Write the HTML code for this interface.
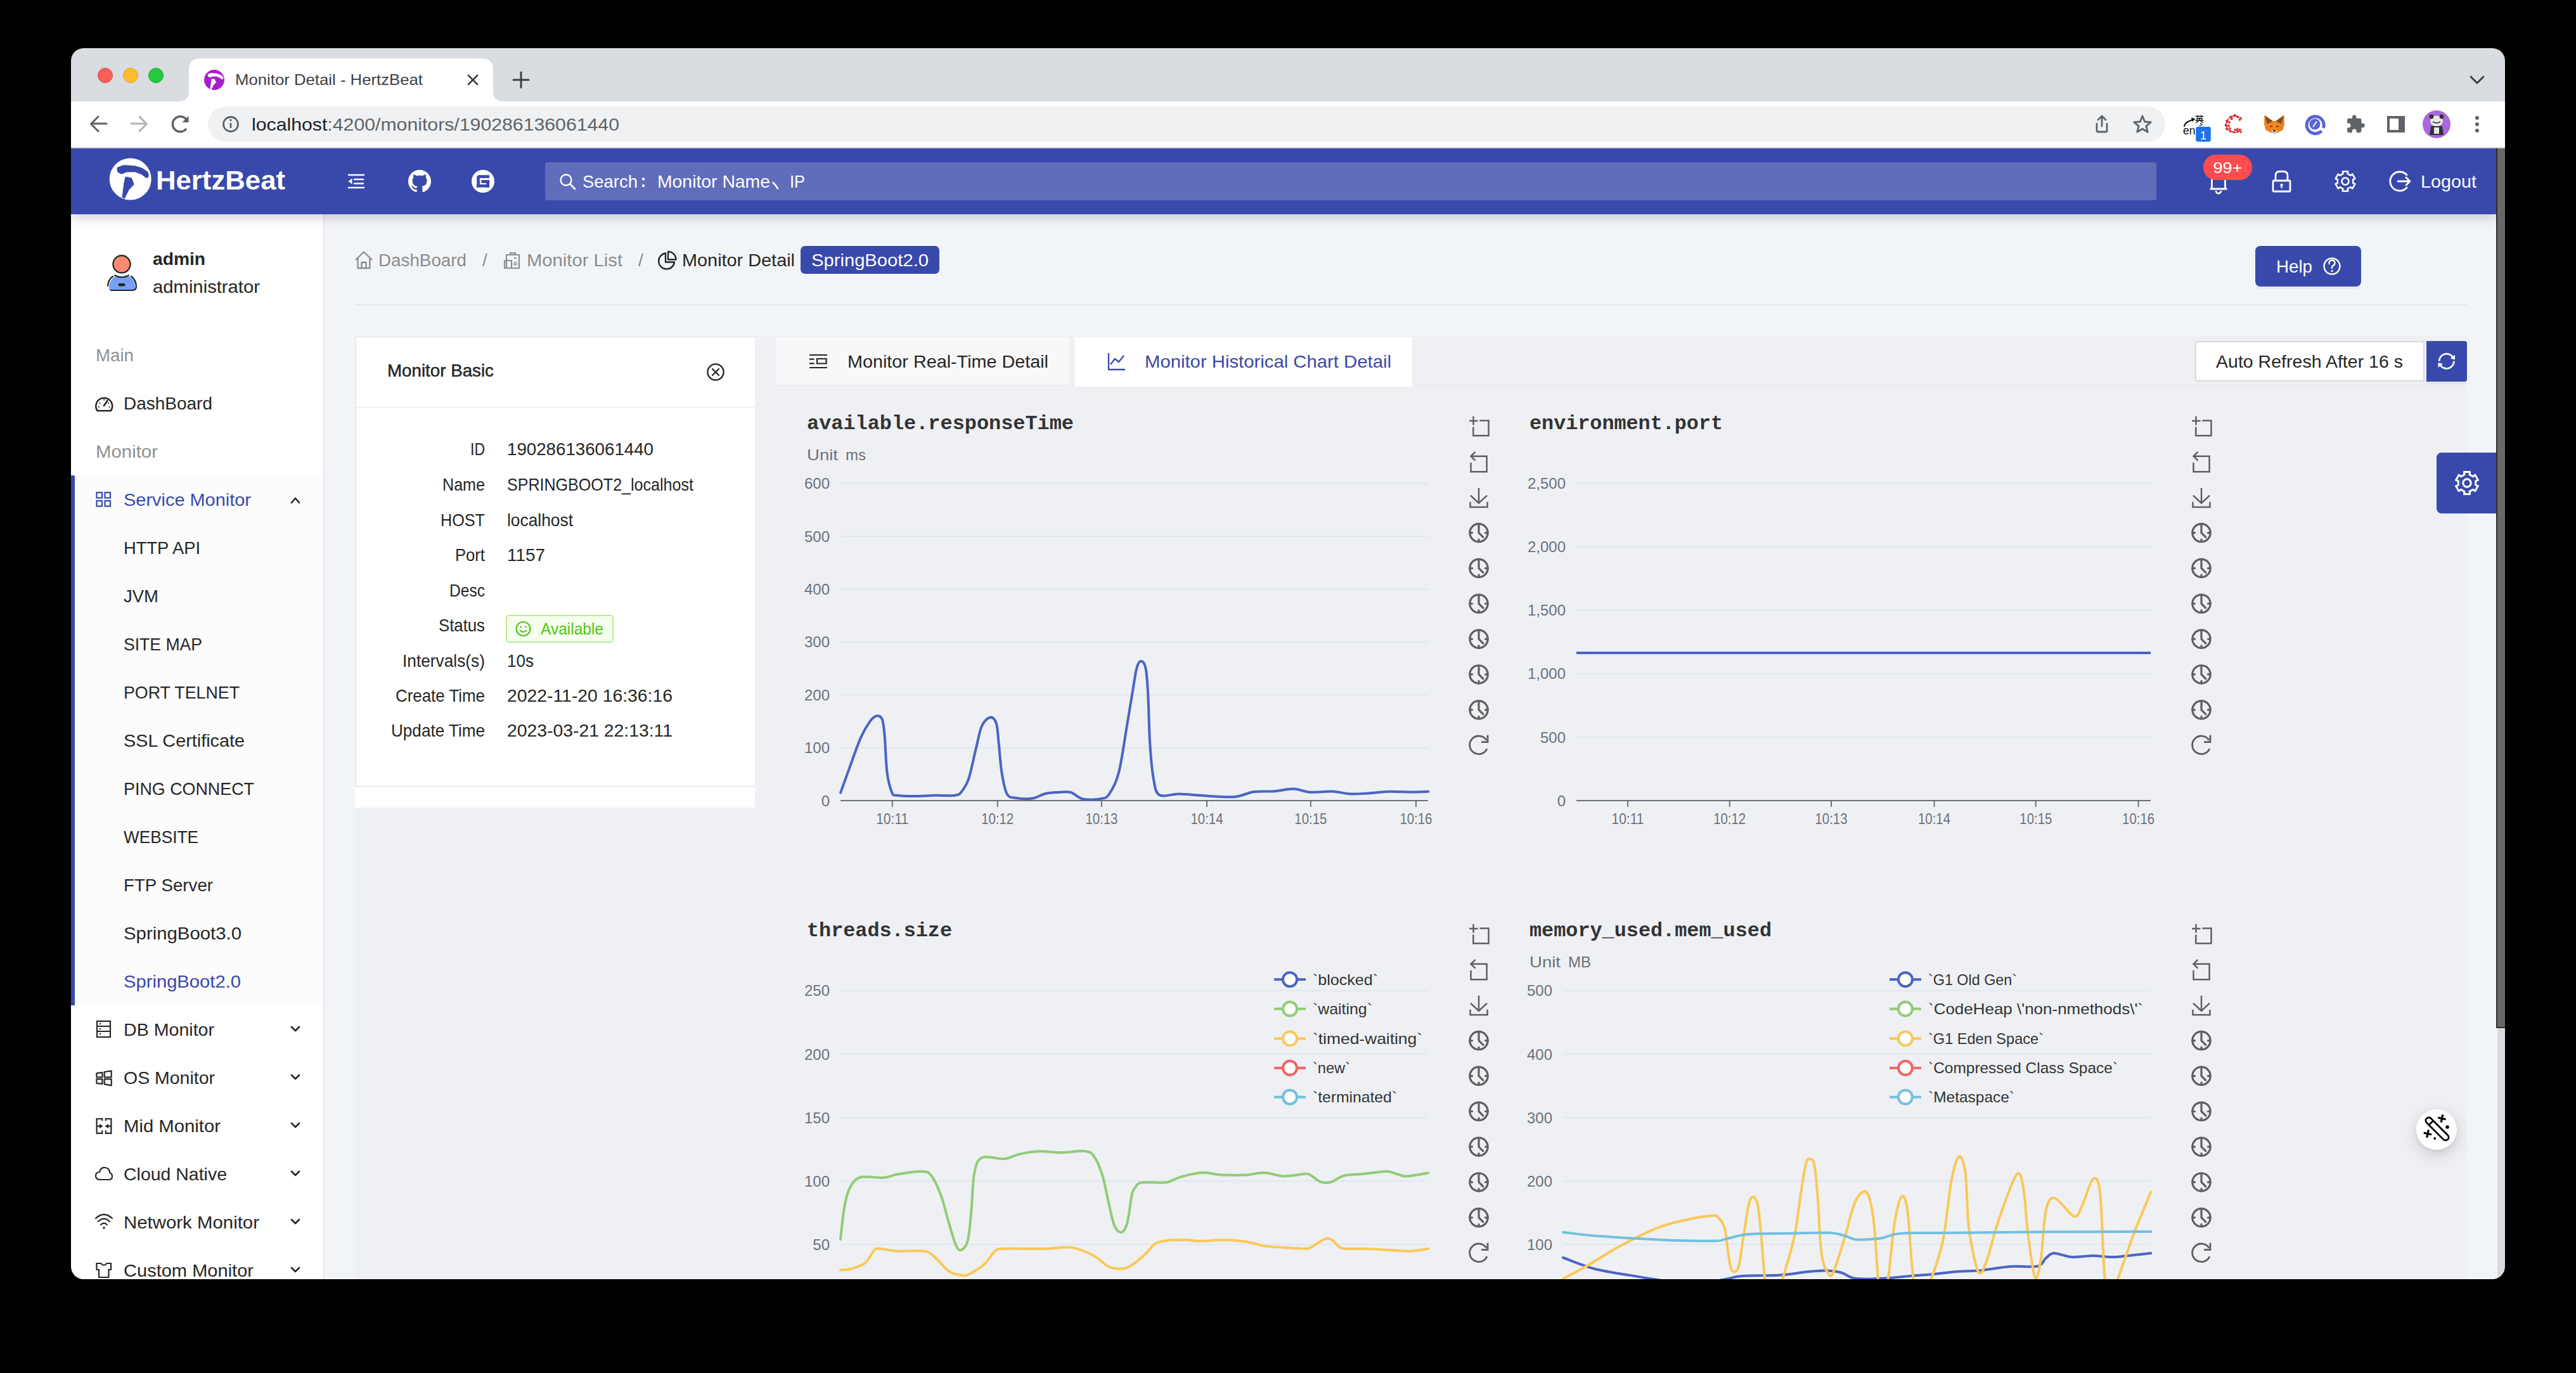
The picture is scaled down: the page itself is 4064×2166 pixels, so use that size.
<!DOCTYPE html><html><head><meta charset="utf-8"><title>Monitor Detail - HertzBeat</title>
<style>html,body{margin:0;padding:0;background:#000;width:4064px;height:2166px;overflow:hidden;font-family:"Liberation Sans", sans-serif;}
#win{position:absolute;left:0;top:0;width:4064px;height:2166px;clip-path:inset(76px 112px 148px 112px round 20px);}
#ov{position:absolute;left:0;top:0;z-index:5;}</style></head><body><div id="win">
<div style="position:absolute;left:112px;top:76px;width:3840px;height:84px;background:#d9dce1;"></div>
<div style="position:absolute;left:112px;top:160px;width:3840px;height:72px;background:#ffffff;z-index:4;"></div>
<div style="position:absolute;left:112px;top:232px;width:3840px;height:2px;background:#d2d4d7;z-index:4;"></div>
<div style="position:absolute;left:112px;top:234px;width:3826px;height:104px;background:#3949ab;z-index:3;box-shadow:0 3px 20px rgba(0,0,0,0.22);"></div>
<div style="position:absolute;left:3938px;top:234px;width:14px;height:1388px;background:#686868;border-left:2px solid #2c2c2c;border-bottom:2px solid #2c2c2c;box-sizing:border-box;z-index:4;"></div>
<div style="position:absolute;left:3940px;top:1622px;width:12px;height:396px;background:#d9dadd;z-index:4;"></div>
<div style="position:absolute;left:112px;top:338px;width:398px;height:1680px;background:#ffffff;"></div>
<div style="position:absolute;left:510px;top:338px;width:2px;height:1680px;background:#efe3e8;"></div>
<div style="position:absolute;left:512px;top:338px;width:3428px;height:1680px;background:#f2f5f8;"></div>
<div style="position:absolute;left:112px;top:750px;width:397px;height:836px;background:#fcfcfc;"></div>
<div style="position:absolute;left:112px;top:750px;width:6px;height:836px;background:#3949ab;"></div>
<div style="position:absolute;left:3558px;top:388px;width:167px;height:64px;background:#3949ab;border-radius:8px;box-shadow:0 4px 0 rgba(0,0,0,0.045);z-index:1;"></div>
<div style="position:absolute;left:560px;top:480px;width:3332px;height:2px;background:#e3e7eb;"></div>
<div style="position:absolute;left:560px;top:1241px;width:633px;height:33px;background:#ffffff;"></div>
<div style="position:absolute;left:560px;top:1274px;width:631px;height:744px;background:#eef0f4;"></div>
<div style="position:absolute;left:560px;top:530px;width:633px;height:712px;background:#ffffff;border:2px solid #ebebeb;border-radius:4px;box-sizing:border-box;"></div>
<div style="position:absolute;left:562px;top:642px;width:629px;height:2px;background:#f0f0f0;z-index:1;"></div>
<div style="position:absolute;left:1191px;top:530px;width:2701px;height:1488px;background:#eef0f4;"></div>
<div style="position:absolute;left:1225px;top:532px;width:462px;height:76px;background:#f8f8f8;"></div>
<div style="position:absolute;left:1225px;top:607px;width:2667px;height:2px;background:#ebebed;"></div>
<div style="position:absolute;left:2228px;top:532px;width:2px;height:77px;background:#ebebed;"></div>
<div style="position:absolute;left:1693px;top:532px;width:2px;height:78px;background:#ececee;"></div>
<div style="position:absolute;left:1695px;top:532px;width:533px;height:78px;background:#ffffff;"></div>
<div style="position:absolute;left:3463px;top:538px;width:362px;height:64px;background:#fff;border:2px solid #d9d9d9;border-radius:4px 0 0 4px;box-sizing:border-box;"></div>
<div style="position:absolute;left:3828px;top:538px;width:64px;height:64px;background:#3949ab;border-radius:0 4px 4px 0;box-shadow:0 4px 0 rgba(0,0,0,0.045);"></div>
<svg id="ov" width="4064" height="2166" viewBox="0 0 4064 2166">
<circle cx="166" cy="119" r="11.5" fill="#ff5f57" stroke="#e0443e" stroke-width="1"/>
<circle cx="206" cy="119" r="11.5" fill="#febc2e" stroke="#dea123" stroke-width="1"/>
<circle cx="246" cy="119" r="11.5" fill="#28c840" stroke="#1aab29" stroke-width="1"/>
<path d="M282,160 Q298,160 298,144 L298,110 Q298,92 316,92 L760,92 Q778,92 778,110 L778,144 Q778,160 794,160 Z" fill="#ffffff"/>
<circle cx="338" cy="126" r="16" fill="#a81fc9"/><polygon points="333.0,115.5 341.5,116.2 347.1,117.9 351.1,120.7 351.8,122.7 351.4,124.7 350.0,124.7 347.1,122.4 341.5,120.2 334.7,120.4 331.3,121.9 328.8,120.7 328.0,118.7 328.5,117.1" fill="#ffffff" stroke="#ffffff" stroke-width="0.7272727272727273" stroke-linejoin="round"/><polygon points="334.2,124.1 339.0,125.0 340.9,130.0 337.0,134.3 333.6,141.1 331.6,139.9 333.0,128.9" fill="#ffffff"/>
<text x="371" y="134" font-size="24" fill="#3c4043" text-anchor="start" font-weight="normal" font-family='"Liberation Sans", sans-serif' textLength="296" lengthAdjust="spacingAndGlyphs" >Monitor Detail - HertzBeat</text>
<path d="M739,119 L753,133 M753,119 L739,133" stroke="#3c4043" stroke-width="2.6" stroke-linecap="round"/>
<path d="M822,114 L822,138 M810,126 L834,126" stroke="#3c4043" stroke-width="3" stroke-linecap="round"/>
<path d="M3898,121 L3908,131 L3918,121" stroke="#3c4043" stroke-width="3" fill="none" stroke-linecap="round" stroke-linejoin="round"/>
<path d="M168,195 L144,195 M155,184 L143.5,195.5 L155,207" stroke="#5f6368" stroke-width="3" fill="none" stroke-linecap="round" stroke-linejoin="round"/>
<path d="M207,195 L231,195 M220,184 L231.5,195.5 L220,207" stroke="#b1b3b6" stroke-width="3" fill="none" stroke-linecap="round" stroke-linejoin="round"/>
<path d="M294,203 A12,12 0 1 1 293.5,188" stroke="#5f6368" stroke-width="3.4" fill="none"/>
<path d="M297.5,183 L297.5,193 L287.5,193 Z" fill="#5f6368"/>
<rect x="328" y="168" width="3088" height="56" rx="28" fill="#eff1f3"/>
<circle cx="364" cy="196" r="11.5" stroke="#5f6368" stroke-width="2.8" fill="none"/>
<rect x="362.6" y="194" width="2.8" height="8" fill="#5f6368"/><circle cx="364" cy="189.5" r="1.7" fill="#5f6368"/>
<text x="397" y="205.5" font-size="28" font-family='"Liberation Sans", sans-serif' textLength="580" lengthAdjust="spacingAndGlyphs"><tspan fill="#202124">localhost</tspan><tspan fill="#5f6368">:4200/monitors/190286136061440</tspan></text>
<path d="M3308,194 L3308,206 Q3308,208 3310,208 L3322,208 Q3324,208 3324,206 L3324,194" stroke="#5f6368" stroke-width="2.8" fill="none" stroke-linejoin="round"/>
<path d="M3316,199 L3316,183 M3310,189 L3316,183 L3322,189" stroke="#5f6368" stroke-width="2.8" fill="none" stroke-linecap="round" stroke-linejoin="round"/>
<polygon points="3380.0,183.0 3383.6,192.0 3393.3,192.7 3385.9,198.9 3388.2,208.3 3380.0,203.2 3371.8,208.3 3374.1,198.9 3366.7,192.7 3376.4,192.0" stroke="#5f6368" stroke-width="2.8" fill="none" stroke-linejoin="round"/>
<text x="3444" y="211.5" font-size="17.5" font-family='"Liberation Sans", sans-serif' fill="#111">en</text>
<path d="M3446,199 Q3447,194 3454,191 Q3458,189 3461,188.5" stroke="#111" stroke-width="2.2" fill="none" stroke-linecap="round"/><path d="M3457,185.5 L3463.5,187.5 L3458.5,192 Z" fill="#111"/>
<path d="M3464,183.5 H3476 M3467,181.5 V185.5 M3473,181.5 V185.5 M3466,190 V187 H3474 V190 M3470,185.5 V190 M3463.5,190 H3476.5 M3469.5,190 L3464.5,194 M3470.5,190 L3476,194 M3471,195 Q3475,195.5 3473,197.5 L3469.5,198.5" stroke="#111" stroke-width="1.3" fill="none"/>
<rect x="3464.3" y="200" width="23.5" height="23.5" rx="3" fill="#1a73e8"/>
<text x="3476" y="219.5" font-size="18" text-anchor="middle" font-family='"Liberation Sans", sans-serif' fill="#fff">1</text>
<path d="M3533,185 Q3524,180 3517,186 Q3510,193 3513,201 Q3517,209 3527,209 Q3532,208.5 3535,205.5" stroke="#d8262c" stroke-width="1.6" fill="none"/>
<path d="M3522,185.5 L3519,189 M3527,183 L3532,186.5 M3516,193 L3512,191 M3515,199 L3511,198 M3517,204.5 L3519,207 M3527,206 L3532,204" stroke="#d8262c" stroke-width="1.3" fill="none"/>
<circle cx="3525.7" cy="182.2" r="2.2" fill="#e0262b"/>
<circle cx="3530.5" cy="184.5" r="1.8" fill="#e0262b"/>
<circle cx="3535.2" cy="186.5" r="1.8" fill="#e0262b"/>
<circle cx="3533.5" cy="189" r="1.8" fill="#e0262b"/>
<circle cx="3519.5" cy="184.5" r="1.9" fill="#e0262b"/>
<circle cx="3521" cy="187.5" r="1.8" fill="#e0262b"/>
<circle cx="3513.5" cy="191" r="2.2" fill="#e0262b"/>
<circle cx="3517" cy="193" r="1.8" fill="#e0262b"/>
<circle cx="3511.5" cy="197.5" r="1.9" fill="#e0262b"/>
<circle cx="3516" cy="198.5" r="1.9" fill="#e0262b"/>
<circle cx="3513" cy="203.5" r="2" fill="#e0262b"/>
<circle cx="3518" cy="202.5" r="1.8" fill="#e0262b"/>
<circle cx="3518.5" cy="207" r="1.8" fill="#e0262b"/>
<circle cx="3524" cy="208.5" r="1.8" fill="#e0262b"/>
<circle cx="3526.5" cy="205" r="2" fill="#e0262b"/>
<circle cx="3530.5" cy="207" r="1.8" fill="#e0262b"/>
<circle cx="3534" cy="205" r="2" fill="#e0262b"/>
<circle cx="3535.5" cy="208.5" r="1.6" fill="#e0262b"/>
<circle cx="3530" cy="203" r="1.6" fill="#e0262b"/>
<polygon points="3572.5,181.5 3586,191 3590,191 3603.5,181.5 3604,196 3601.5,205 3593,209.5 3588,211 3583,209.5 3574.5,205 3572,196" fill="#e8821e"/>
<polygon points="3573,182.5 3585.5,191 3577,195.5" fill="#8a4a1c"/><polygon points="3603,182.5 3590.5,191 3599,195.5" fill="#8a4a1c"/>
<polygon points="3577,195.5 3588,193 3599,195.5 3596,203 3588,205 3580,203" fill="#f6851b"/>
<polygon points="3582.5,206.5 3588,204.5 3593.5,206.5 3590.5,210.8 3585.5,210.8" fill="#d7c1b3"/><circle cx="3588" cy="206.3" r="1.6" fill="#222"/>
<path d="M3581,199.5 L3585,199.5 M3591,199.5 L3595,199.5" stroke="#233447" stroke-width="1.6"/>
<path d="M3662.5,206.5 A13.5,13.5 0 1 1 3665.3,202" stroke="#5a64d6" stroke-width="5" fill="none"/><circle cx="3652" cy="195.9" r="8.6" fill="#5a64d6"/><path d="M3649.5,199.5 L3654.5,192" stroke="#fff" stroke-width="2" stroke-linecap="round"/>
<g transform="translate(3700.4,180.1) scale(1.32)"><path fill="#5f6368" d="M20.5 11H19V7c0-1.1-.9-2-2-2h-4V3.5C13 2.12 11.88 1 10.5 1S8 2.12 8 3.5V5H4c-1.1 0-1.99.9-1.99 2v3.8H3.5c1.49 0 2.7 1.21 2.7 2.7s-1.21 2.7-2.7 2.7H2V20c0 1.1.9 2 2 2h3.8v-1.5c0-1.49 1.21-2.7 2.7-2.7 1.49 0 2.7 1.21 2.7 2.7V22H17c1.1 0 2-.9 2-2v-4h1.5c1.38 0 2.5-1.12 2.5-2.5S21.88 11 20.5 11z"/></g>
<rect x="3766" y="183" width="28" height="26" fill="#5f6368"/><rect x="3770" y="187" width="14" height="18" fill="#fff"/>
<circle cx="3844" cy="196" r="22" fill="#a867e0"/>
<ellipse cx="3844" cy="191" rx="10" ry="8.5" fill="#e8e8e8"/><circle cx="3836" cy="184" r="3.4" fill="#333"/><circle cx="3852" cy="184" r="3.4" fill="#333"/><path d="M3838,192 Q3844,196 3850,192" stroke="#333" stroke-width="1.6" fill="none"/>
<path d="M3835,199 L3853,199 L3855,213 L3833,213 Z" fill="#333"/><rect x="3840" y="201" width="8" height="10" fill="#e8e8e8"/>
<circle cx="3908" cy="186" r="3" fill="#5f6368"/>
<circle cx="3908" cy="196" r="3" fill="#5f6368"/>
<circle cx="3908" cy="206" r="3" fill="#5f6368"/>
<circle cx="205.7" cy="282.5" r="33" fill="#ffffff"/><polygon points="195.4,260.9 212.9,262.3 224.5,265.8 232.7,271.6 234.1,275.7 233.3,279.8 230.4,279.8 224.5,275.1 212.9,270.5 198.9,271.0 191.9,274.0 186.7,271.6 185.0,267.5 186.1,264.1" fill="#3949ab" stroke="#3949ab" stroke-width="1.5" stroke-linejoin="round"/><polygon points="197.8,278.6 207.7,280.4 211.7,290.8 203.6,299.6 196.6,313.6 192.5,311.2 195.4,288.5" fill="#3949ab"/>
<text x="246" y="299" font-size="42" fill="#ffffff" text-anchor="start" font-weight="bold" font-family='"Liberation Sans", sans-serif' textLength="204" lengthAdjust="spacingAndGlyphs" >HertzBeat</text>
<path d="M549,276 H575 M558,283 H574 M558,289.5 H574 M549,296 H575" stroke="#fff" stroke-width="2.4"/>
<path d="M549.5,286 L555.5,281.5 L555.5,290.5 Z" fill="#fff"/>
<g transform="translate(644,268) scale(2.25)"><path fill="#fff" d="M8 0C3.58 0 0 3.58 0 8c0 3.54 2.29 6.53 5.47 7.59.4.07.55-.17.55-.38 0-.19-.01-.82-.01-1.49-2.01.37-2.53-.49-2.69-.94-.09-.23-.48-.94-.82-1.13-.28-.15-.68-.52-.01-.53.63-.01 1.08.58 1.23.82.72 1.21 1.87.87 2.33.66.07-.52.28-.87.51-1.07-1.78-.2-3.64-.89-3.64-3.95 0-.87.31-1.59.82-2.15-.08-.2-.36-1.02.08-2.12 0 0 .67-.21 2.2.82.64-.18 1.32-.27 2-.27.68 0 1.36.09 2 .27 1.53-1.04 2.2-.82 2.2-.82.44 1.1.16 1.92.08 2.12.51.56.82 1.27.82 2.15 0 3.07-1.87 3.75-3.65 3.95.29.25.54.73.54 1.48 0 1.07-.01 1.93-.01 2.2 0 .21.15.46.55.38A8.013 8.013 0 0016 8c0-4.42-3.58-8-8-8z"/></g>
<circle cx="762" cy="286" r="18" fill="#fff"/>
<g fill="#3949ab"><rect x="755" y="276.2" width="17.1" height="4.7"/><rect x="752.2" y="279" width="4.7" height="16.6"/><rect x="752.2" y="290.9" width="19.9" height="4.7"/><rect x="767.4" y="284" width="4.7" height="11.6"/><rect x="759.5" y="284" width="12.6" height="4.8"/><path d="M752.2,280 Q752.2,276.2 756,276.2 L757,276.2 L757,280 Z"/></g>
<rect x="860" y="256" width="2542" height="60" rx="4" fill="#ffffff" fill-opacity="0.2"/>
<circle cx="893" cy="284" r="8.5" stroke="#fff" stroke-width="2.4" fill="none"/><path d="M899,290 L907,298" stroke="#fff" stroke-width="2.6" stroke-linecap="round"/>
<text x="919" y="296" font-size="28" fill="#ffffff" text-anchor="start" font-weight="normal" font-family='"Liberation Sans", sans-serif' textLength="87" lengthAdjust="spacingAndGlyphs" >Search</text>
<circle cx="1015" cy="282.5" r="2.2" fill="#fff"/><circle cx="1015" cy="293" r="2.2" fill="#fff"/>
<text x="1037" y="296" font-size="28" fill="#ffffff" text-anchor="start" font-weight="normal" font-family='"Liberation Sans", sans-serif' textLength="178" lengthAdjust="spacingAndGlyphs" >Monitor Name</text>
<path d="M1219.5,288 Q1224,292 1227,297.5" stroke="#fff" stroke-width="2.6" fill="none" stroke-linecap="round"/>
<text x="1246" y="296" font-size="28" fill="#ffffff" text-anchor="start" font-weight="normal" font-family='"Liberation Sans", sans-serif' textLength="24" lengthAdjust="spacingAndGlyphs" >IP</text>
<path d="M3486.5,298 H3513.5 M3489.5,298 V280 A10.5,10.5 0 0 1 3510.5,280 V298 M3496,301 A4,4 0 0 0 3504,301" stroke="#fff" stroke-width="2.8" fill="none" stroke-linejoin="round"/>
<rect x="3476" y="244" width="77" height="40" rx="20" fill="#ff4d4f"/>
<text x="3514.5" y="273" font-size="24" fill="#ffffff" text-anchor="middle" font-weight="normal" font-family='"Liberation Sans", sans-serif' textLength="46" lengthAdjust="spacingAndGlyphs" >99+</text>
<rect x="3586" y="285" width="27" height="17" rx="1" stroke="#fff" stroke-width="2.8" fill="none"/>
<path d="M3590,285 V277 Q3590,270.5 3596.5,270.5 H3602.5 Q3609,270.5 3609,277 V285" stroke="#fff" stroke-width="2.8" fill="none"/>
<circle cx="3599.5" cy="292" r="2.2" fill="#fff"/><rect x="3598.5" y="292" width="2" height="5" fill="#fff"/>
<polygon points="3695.9,270.5 3704.1,270.5 3703.7,274.1 3708.5,276.8 3711.3,274.7 3715.4,281.8 3712.2,283.2 3712.2,288.8 3715.4,290.2 3711.3,297.3 3708.5,295.2 3703.7,297.9 3704.1,301.5 3695.9,301.5 3696.3,297.9 3691.5,295.2 3688.7,297.3 3684.6,290.2 3687.8,288.8 3687.8,283.2 3684.6,281.8 3688.7,274.7 3691.5,276.8 3696.3,274.1" stroke="#fff" stroke-width="2.6" fill="none" stroke-linejoin="round"/><circle cx="3700" cy="286" r="5.5" stroke="#fff" stroke-width="2.6" fill="none"/>
<path d="M3797,276 A15,15 0 1 0 3797,296" stroke="#fff" stroke-width="2.8" fill="none" stroke-linecap="round"/>
<path d="M3783,286 H3802 M3796,280 L3802,286 L3796,292" stroke="#fff" stroke-width="2.8" fill="none" stroke-linecap="round" stroke-linejoin="round"/>
<text x="3819" y="296" font-size="28" fill="#ffffff" text-anchor="start" font-weight="normal" font-family='"Liberation Sans", sans-serif' textLength="88" lengthAdjust="spacingAndGlyphs" >Logout</text>
<circle cx="192" cy="416.8" r="13.6" fill="#ff8a73" stroke="#222" stroke-width="2.2"/>
<path d="M172,456 Q171,446 178,439 Q182,435 186,435 Q192,439 198,435 Q204,435 208,439 Q215,446 213,456 Q212,458 209,458 L175,458 Q172,458 172,456 Z" fill="#76a0f7"/>
<path d="M170,451 Q171,441 178,436 M207,436 Q214,441 215,451 Q215,458 209,458 L175,458" stroke="#222" stroke-width="2.2" fill="none" stroke-linecap="round"/>
<path d="M181,434.5 Q192,440 203,434.5" stroke="#222" stroke-width="2.2" fill="none" stroke-linecap="round"/>
<rect x="186.5" y="447" width="11" height="4.5" rx="2.2" fill="#222"/>
<text x="241" y="418" font-size="28" fill="#262626" text-anchor="start" font-weight="bold" font-family='"Liberation Sans", sans-serif' textLength="83" lengthAdjust="spacingAndGlyphs" >admin</text>
<text x="241" y="462" font-size="28" fill="#262626" text-anchor="start" font-weight="normal" font-family='"Liberation Sans", sans-serif' textLength="169" lengthAdjust="spacingAndGlyphs" >administrator</text>
<text x="151" y="570" font-size="28" fill="#8f8f8f" text-anchor="start" font-weight="normal" font-family='"Liberation Sans", sans-serif' textLength="60" lengthAdjust="spacingAndGlyphs" >Main</text>
<text x="151" y="722" font-size="28" fill="#8f8f8f" text-anchor="start" font-weight="normal" font-family='"Liberation Sans", sans-serif' textLength="98" lengthAdjust="spacingAndGlyphs" >Monitor</text>
<path d="M153.5,648 A13,13 0 1 1 175,648 Z" stroke="#262626" stroke-width="2.4" fill="none" stroke-linejoin="round"/>
<path d="M164,640 L169.5,632" stroke="#262626" stroke-width="2.6" stroke-linecap="round"/>
<circle cx="157.5" cy="636" r="1.1" fill="#262626"/>
<circle cx="164.3" cy="630.5" r="1.1" fill="#262626"/>
<circle cx="171" cy="636" r="1.1" fill="#262626"/>
<circle cx="156" cy="642" r="1.1" fill="#262626"/>
<circle cx="172.5" cy="642" r="1.1" fill="#262626"/>
<text x="195" y="646" font-size="28" fill="#262626" text-anchor="start" font-weight="normal" font-family='"Liberation Sans", sans-serif' textLength="140" lengthAdjust="spacingAndGlyphs" >DashBoard</text>
<rect x="152.5" y="777" width="8.5" height="8.5" stroke="#3949ab" stroke-width="2.2" fill="none"/>
<rect x="165.5" y="777" width="8.5" height="8.5" stroke="#3949ab" stroke-width="2.2" fill="none"/>
<rect x="152.5" y="790" width="8.5" height="8.5" stroke="#3949ab" stroke-width="2.2" fill="none"/>
<rect x="165.5" y="790" width="8.5" height="8.5" stroke="#3949ab" stroke-width="2.2" fill="none"/>
<text x="195" y="798" font-size="28" fill="#3949ab" text-anchor="start" font-weight="normal" font-family='"Liberation Sans", sans-serif' textLength="201" lengthAdjust="spacingAndGlyphs" >Service Monitor</text>
<path d="M460,793 L466,786 L472,793" stroke="#262626" stroke-width="2.6" fill="none" stroke-linecap="round" stroke-linejoin="round"/>
<text x="195" y="874" font-size="28" fill="#262626" text-anchor="start" font-weight="normal" font-family='"Liberation Sans", sans-serif' textLength="121" lengthAdjust="spacingAndGlyphs" >HTTP API</text>
<text x="195" y="950" font-size="28" fill="#262626" text-anchor="start" font-weight="normal" font-family='"Liberation Sans", sans-serif' textLength="55" lengthAdjust="spacingAndGlyphs" >JVM</text>
<text x="195" y="1026" font-size="28" fill="#262626" text-anchor="start" font-weight="normal" font-family='"Liberation Sans", sans-serif' textLength="124" lengthAdjust="spacingAndGlyphs" >SITE MAP</text>
<text x="195" y="1102" font-size="28" fill="#262626" text-anchor="start" font-weight="normal" font-family='"Liberation Sans", sans-serif' textLength="183" lengthAdjust="spacingAndGlyphs" >PORT TELNET</text>
<text x="195" y="1178" font-size="28" fill="#262626" text-anchor="start" font-weight="normal" font-family='"Liberation Sans", sans-serif' textLength="191" lengthAdjust="spacingAndGlyphs" >SSL Certificate</text>
<text x="195" y="1254" font-size="28" fill="#262626" text-anchor="start" font-weight="normal" font-family='"Liberation Sans", sans-serif' textLength="206" lengthAdjust="spacingAndGlyphs" >PING CONNECT</text>
<text x="195" y="1330" font-size="28" fill="#262626" text-anchor="start" font-weight="normal" font-family='"Liberation Sans", sans-serif' textLength="118" lengthAdjust="spacingAndGlyphs" >WEBSITE</text>
<text x="195" y="1406" font-size="28" fill="#262626" text-anchor="start" font-weight="normal" font-family='"Liberation Sans", sans-serif' textLength="141" lengthAdjust="spacingAndGlyphs" >FTP Server</text>
<text x="195" y="1482" font-size="28" fill="#262626" text-anchor="start" font-weight="normal" font-family='"Liberation Sans", sans-serif' textLength="186" lengthAdjust="spacingAndGlyphs" >SpringBoot3.0</text>
<text x="195" y="1558" font-size="28" fill="#3949ab" text-anchor="start" font-weight="normal" font-family='"Liberation Sans", sans-serif' textLength="185" lengthAdjust="spacingAndGlyphs" >SpringBoot2.0</text>
<text x="195" y="1634" font-size="28" fill="#262626" text-anchor="start" font-weight="normal" font-family='"Liberation Sans", sans-serif' textLength="143" lengthAdjust="spacingAndGlyphs" >DB Monitor</text>
<path d="M460,1620 L466,1626 L472,1620" stroke="#262626" stroke-width="2.6" fill="none" stroke-linecap="round" stroke-linejoin="round"/>
<text x="195" y="1710" font-size="28" fill="#262626" text-anchor="start" font-weight="normal" font-family='"Liberation Sans", sans-serif' textLength="144" lengthAdjust="spacingAndGlyphs" >OS Monitor</text>
<path d="M460,1696 L466,1702 L472,1696" stroke="#262626" stroke-width="2.6" fill="none" stroke-linecap="round" stroke-linejoin="round"/>
<text x="195" y="1786" font-size="28" fill="#262626" text-anchor="start" font-weight="normal" font-family='"Liberation Sans", sans-serif' textLength="153" lengthAdjust="spacingAndGlyphs" >Mid Monitor</text>
<path d="M460,1772 L466,1778 L472,1772" stroke="#262626" stroke-width="2.6" fill="none" stroke-linecap="round" stroke-linejoin="round"/>
<text x="195" y="1862" font-size="28" fill="#262626" text-anchor="start" font-weight="normal" font-family='"Liberation Sans", sans-serif' textLength="163" lengthAdjust="spacingAndGlyphs" >Cloud Native</text>
<path d="M460,1848 L466,1854 L472,1848" stroke="#262626" stroke-width="2.6" fill="none" stroke-linecap="round" stroke-linejoin="round"/>
<text x="195" y="1938" font-size="28" fill="#262626" text-anchor="start" font-weight="normal" font-family='"Liberation Sans", sans-serif' textLength="214" lengthAdjust="spacingAndGlyphs" >Network Monitor</text>
<path d="M460,1924 L466,1930 L472,1924" stroke="#262626" stroke-width="2.6" fill="none" stroke-linecap="round" stroke-linejoin="round"/>
<text x="195" y="2014" font-size="28" fill="#262626" text-anchor="start" font-weight="normal" font-family='"Liberation Sans", sans-serif' textLength="205" lengthAdjust="spacingAndGlyphs" >Custom Monitor</text>
<path d="M460,2000 L466,2006 L472,2000" stroke="#262626" stroke-width="2.6" fill="none" stroke-linecap="round" stroke-linejoin="round"/>
<rect x="153" y="1611" width="21" height="25" stroke="#262626" stroke-width="2.2" fill="none"/><path d="M153,1619 H174 M153,1627 H174" stroke="#262626" stroke-width="2.2"/>
<circle cx="158" cy="1615" r="1.2" fill="#262626"/>
<circle cx="158" cy="1623" r="1.2" fill="#262626"/>
<circle cx="158" cy="1631" r="1.2" fill="#262626"/>
<path d="M152.4,1693.2 L161.4,1691.9 V1699.3 H152.4 Z M164.7,1691 L175.7,1689.3 V1699.3 H164.7 Z M152.4,1702.4 H161.4 V1709.8 L152.4,1708.8 Z M164.7,1702.4 H175.7 V1712.4 L164.7,1710.3 Z" stroke="#262626" stroke-width="2.2" fill="none" stroke-linejoin="round"/>
<path d="M161.2,1768.3 V1765 H152.6 V1787.8 H161.2 V1783.2 M166.8,1768.3 V1765 H175.4 V1787.8 H166.8 V1783.2 M152.6,1776.6 H158 M175.4,1776.6 H170" stroke="#262626" stroke-width="2.2" fill="none"/>
<path d="M157,1773 L162.5,1776.6 L157,1780.2 Z M171,1773 L165.5,1776.6 L171,1780.2 Z" fill="#262626"/>
<path d="M158,1861 Q151,1861 151,1855 Q151,1849 157,1849 Q159,1841 166,1842 Q173,1843 173,1850 Q177,1851 177,1856 Q177,1861 171,1861 Z" stroke="#262626" stroke-width="2.2" fill="none" stroke-linejoin="round"/>
<path d="M151,1922 Q164,1910 177,1922 M155,1927 Q164,1918 173,1927 M159,1932 Q164,1927 169,1932" stroke="#262626" stroke-width="2.2" fill="none" stroke-linecap="round"/><circle cx="164" cy="1937" r="1.8" fill="#262626"/>
<path d="M152.5,1993 H159 Q164,1999 168.5,1993 H175 V2003 H171.5 V2015 H156 V2003 H152.5 Z" stroke="#262626" stroke-width="2.2" fill="none" stroke-linejoin="miter"/>
<path d="M561,410 L574,397.5 L587,410 M564.5,407 V423 H583.5 V407 M570.5,423 V414 H577.5 V423" stroke="#8c8c8c" stroke-width="2.3" fill="none" stroke-linejoin="round"/>
<text x="597" y="420" font-size="28" fill="#8c8c8c" text-anchor="start" font-weight="normal" font-family='"Liberation Sans", sans-serif' textLength="139" lengthAdjust="spacingAndGlyphs" >DashBoard</text>
<text x="761" y="420" font-size="28" fill="#8c8c8c" text-anchor="start" font-weight="normal" font-family='"Liberation Sans", sans-serif' >/</text>
<path d="M805,402 V399 H813 V402 M799,402 H819 V423 H799 Z M796,411 H807 V423 H796 Z" stroke="#8c8c8c" stroke-width="2.2" fill="none" stroke-linejoin="round"/><circle cx="813" cy="416" r="2" stroke="#8c8c8c" stroke-width="1.6" fill="none"/><path d="M811,407 h4" stroke="#8c8c8c" stroke-width="2"/>
<text x="831" y="420" font-size="28" fill="#8c8c8c" text-anchor="start" font-weight="normal" font-family='"Liberation Sans", sans-serif' textLength="151" lengthAdjust="spacingAndGlyphs" >Monitor List</text>
<text x="1007" y="420" font-size="28" fill="#8c8c8c" text-anchor="start" font-weight="normal" font-family='"Liberation Sans", sans-serif' >/</text>
<path d="M1050,399.5 A12.5,12.5 0 1 0 1064,413.5 L1050,413.5 Z" stroke="#262626" stroke-width="2.4" fill="none" stroke-linejoin="round"/><path d="M1054,397 A12.5,12.5 0 0 1 1066.5,409.5 L1054,409.5 Z" stroke="#262626" stroke-width="2.4" fill="none" stroke-linejoin="round"/>
<text x="1076" y="420" font-size="28" fill="#262626" text-anchor="start" font-weight="normal" font-family='"Liberation Sans", sans-serif' textLength="178" lengthAdjust="spacingAndGlyphs" >Monitor Detail</text>
<rect x="1263" y="388" width="219" height="44" rx="7" fill="#3949ab"/>
<text x="1280" y="420" font-size="28" fill="#ffffff" text-anchor="start" font-weight="normal" font-family='"Liberation Sans", sans-serif' textLength="185" lengthAdjust="spacingAndGlyphs" >SpringBoot2.0</text>
<text x="3591" y="430" font-size="28" fill="#ffffff" text-anchor="start" font-weight="normal" font-family='"Liberation Sans", sans-serif' textLength="57" lengthAdjust="spacingAndGlyphs" >Help</text>
<circle cx="3679" cy="420" r="12.5" stroke="#fff" stroke-width="2.4" fill="none"/>
<path d="M3674.5,416 Q3674.5,410.5 3679,410.5 Q3683.5,410.5 3683.5,415 Q3683.5,418 3679.5,420 L3679,423" stroke="#fff" stroke-width="2.4" fill="none" stroke-linecap="round"/><circle cx="3679" cy="427.5" r="1.6" fill="#fff"/>
<text x="611" y="594" font-size="28" fill="#262626" text-anchor="start" font-weight="normal" font-family='"Liberation Sans", sans-serif' textLength="168" lengthAdjust="spacingAndGlyphs" stroke="#262626" stroke-width="0.5">Monitor Basic</text>
<circle cx="1129" cy="587" r="12.6" stroke="#262626" stroke-width="2.3" fill="none"/><path d="M1124,582 L1134,592 M1134,582 L1124,592" stroke="#262626" stroke-width="2.3" stroke-linecap="round"/>
<text x="765" y="718" font-size="28" fill="#262626" text-anchor="end" font-weight="normal" font-family='"Liberation Sans", sans-serif' textLength="23" lengthAdjust="spacingAndGlyphs" >ID</text>
<text x="800" y="718" font-size="28" fill="#262626" text-anchor="start" font-weight="normal" font-family='"Liberation Sans", sans-serif' textLength="231" lengthAdjust="spacingAndGlyphs" >190286136061440</text>
<text x="765" y="774" font-size="28" fill="#262626" text-anchor="end" font-weight="normal" font-family='"Liberation Sans", sans-serif' textLength="67" lengthAdjust="spacingAndGlyphs" >Name</text>
<text x="800" y="774" font-size="28" fill="#262626" text-anchor="start" font-weight="normal" font-family='"Liberation Sans", sans-serif' textLength="294" lengthAdjust="spacingAndGlyphs" >SPRINGBOOT2_localhost</text>
<text x="765" y="830" font-size="28" fill="#262626" text-anchor="end" font-weight="normal" font-family='"Liberation Sans", sans-serif' textLength="70" lengthAdjust="spacingAndGlyphs" >HOST</text>
<text x="800" y="830" font-size="28" fill="#262626" text-anchor="start" font-weight="normal" font-family='"Liberation Sans", sans-serif' textLength="104" lengthAdjust="spacingAndGlyphs" >localhost</text>
<text x="765" y="885" font-size="28" fill="#262626" text-anchor="end" font-weight="normal" font-family='"Liberation Sans", sans-serif' textLength="47" lengthAdjust="spacingAndGlyphs" >Port</text>
<text x="800" y="885" font-size="28" fill="#262626" text-anchor="start" font-weight="normal" font-family='"Liberation Sans", sans-serif' textLength="60" lengthAdjust="spacingAndGlyphs" >1157</text>
<text x="765" y="941" font-size="28" fill="#262626" text-anchor="end" font-weight="normal" font-family='"Liberation Sans", sans-serif' textLength="56" lengthAdjust="spacingAndGlyphs" >Desc</text>
<text x="765" y="996" font-size="28" fill="#262626" text-anchor="end" font-weight="normal" font-family='"Liberation Sans", sans-serif' textLength="73" lengthAdjust="spacingAndGlyphs" >Status</text>
<text x="765" y="1052" font-size="28" fill="#262626" text-anchor="end" font-weight="normal" font-family='"Liberation Sans", sans-serif' textLength="130" lengthAdjust="spacingAndGlyphs" >Intervals(s)</text>
<text x="800" y="1052" font-size="28" fill="#262626" text-anchor="start" font-weight="normal" font-family='"Liberation Sans", sans-serif' textLength="42" lengthAdjust="spacingAndGlyphs" >10s</text>
<text x="765" y="1107" font-size="28" fill="#262626" text-anchor="end" font-weight="normal" font-family='"Liberation Sans", sans-serif' textLength="141" lengthAdjust="spacingAndGlyphs" >Create Time</text>
<text x="800" y="1107" font-size="28" fill="#262626" text-anchor="start" font-weight="normal" font-family='"Liberation Sans", sans-serif' textLength="261" lengthAdjust="spacingAndGlyphs" >2022-11-20 16:36:16</text>
<text x="765" y="1162" font-size="28" fill="#262626" text-anchor="end" font-weight="normal" font-family='"Liberation Sans", sans-serif' textLength="148" lengthAdjust="spacingAndGlyphs" >Update Time</text>
<text x="800" y="1162" font-size="28" fill="#262626" text-anchor="start" font-weight="normal" font-family='"Liberation Sans", sans-serif' textLength="261" lengthAdjust="spacingAndGlyphs" >2023-03-21 22:13:11</text>
<rect x="799" y="971" width="168" height="42" rx="4" fill="#f6ffed" stroke="#b7eb8f" stroke-width="2"/>
<circle cx="825.5" cy="992" r="11" stroke="#52c41a" stroke-width="2.2" fill="none"/><circle cx="821.5" cy="989" r="1.4" fill="#52c41a"/><circle cx="829.5" cy="989" r="1.4" fill="#52c41a"/><path d="M820.5,994.5 Q825.5,999 830.5,994.5" stroke="#52c41a" stroke-width="2" fill="none" stroke-linecap="round"/>
<text x="853" y="1001" font-size="25" fill="#52c41a" text-anchor="start" font-weight="normal" font-family='"Liberation Sans", sans-serif' textLength="99" lengthAdjust="spacingAndGlyphs" >Available</text>
<path d="M1277,560 H1305 M1277,580 H1305 M1277,566.7 H1284.5 M1277,573.3 H1284.5 M1289,566 H1303.5 V573.5 H1289 Z" stroke="#262626" stroke-width="2.2" fill="none"/>
<text x="1337" y="580" font-size="28" fill="#262626" text-anchor="start" font-weight="normal" font-family='"Liberation Sans", sans-serif' textLength="317" lengthAdjust="spacingAndGlyphs" >Monitor Real-Time Detail</text>
<path d="M1749,557 V583 H1775 M1752,575 L1759,566 L1765,571 L1773,561" stroke="#3949ab" stroke-width="2.3" fill="none" stroke-linejoin="round"/>
<text x="1806" y="580" font-size="28" fill="#3949ab" text-anchor="start" font-weight="normal" font-family='"Liberation Sans", sans-serif' textLength="389" lengthAdjust="spacingAndGlyphs" >Monitor Historical Chart Detail</text>
<text x="3496" y="580" font-size="28" fill="#262626" text-anchor="start" font-weight="normal" font-family='"Liberation Sans", sans-serif' textLength="295" lengthAdjust="spacingAndGlyphs" >Auto Refresh After 16 s</text>
<path d="M3848.1,569.8 A11.7,11.7 0 0 1 3869.9,564 M3871.5,569.8 A11.7,11.7 0 0 1 3849.7,575.6" stroke="#fff" stroke-width="2.7" fill="none"/><polygon points="3873,559.8 3873,567.6 3865.8,565.6" fill="#fff"/><polygon points="3846.6,572 3846.6,579.8 3853.8,574" fill="#fff"/>
<text x="1273" y="677" font-size="32" fill="#333333" text-anchor="start" font-weight="bold" font-family='"Liberation Mono", monospace' textLength="421" lengthAdjust="spacingAndGlyphs" >available.responseTime</text>
<text x="1273" y="726" font-size="24" fill="#6e7079" text-anchor="start" font-weight="normal" font-family='"Liberation Sans", sans-serif' textLength="49" lengthAdjust="spacingAndGlyphs" >Unit</text>
<text x="1334" y="726" font-size="24" fill="#6e7079" text-anchor="start" font-weight="normal" font-family='"Liberation Sans", sans-serif' >ms</text>
<rect x="1326" y="1262.0" width="927" height="2" fill="#e0e6f1"/>
<text x="1309" y="1271.6" font-size="24" fill="#6e7079" text-anchor="end" font-weight="normal" font-family='"Liberation Sans", sans-serif' >0</text>
<rect x="1326" y="1178.6" width="927" height="2" fill="#e0e6f1"/>
<text x="1309" y="1188.2" font-size="24" fill="#6e7079" text-anchor="end" font-weight="normal" font-family='"Liberation Sans", sans-serif' >100</text>
<rect x="1326" y="1095.2" width="927" height="2" fill="#e0e6f1"/>
<text x="1309" y="1104.8" font-size="24" fill="#6e7079" text-anchor="end" font-weight="normal" font-family='"Liberation Sans", sans-serif' >200</text>
<rect x="1326" y="1011.8" width="927" height="2" fill="#e0e6f1"/>
<text x="1309" y="1021.4" font-size="24" fill="#6e7079" text-anchor="end" font-weight="normal" font-family='"Liberation Sans", sans-serif' >300</text>
<rect x="1326" y="928.4" width="927" height="2" fill="#e0e6f1"/>
<text x="1309" y="938.0" font-size="24" fill="#6e7079" text-anchor="end" font-weight="normal" font-family='"Liberation Sans", sans-serif' >400</text>
<rect x="1326" y="845.0" width="927" height="2" fill="#e0e6f1"/>
<text x="1309" y="854.6" font-size="24" fill="#6e7079" text-anchor="end" font-weight="normal" font-family='"Liberation Sans", sans-serif' >500</text>
<rect x="1326" y="761.6" width="927" height="2" fill="#e0e6f1"/>
<text x="1309" y="771.2" font-size="24" fill="#6e7079" text-anchor="end" font-weight="normal" font-family='"Liberation Sans", sans-serif' >600</text>
<text x="2413" y="677" font-size="32" fill="#333333" text-anchor="start" font-weight="bold" font-family='"Liberation Mono", monospace' textLength="305" lengthAdjust="spacingAndGlyphs" >environment.port</text>
<rect x="2487" y="1262.0" width="906" height="2" fill="#e0e6f1"/>
<text x="2470" y="1271.6" font-size="24" fill="#6e7079" text-anchor="end" font-weight="normal" font-family='"Liberation Sans", sans-serif' >0</text>
<rect x="2487" y="1161.9" width="906" height="2" fill="#e0e6f1"/>
<text x="2470" y="1171.5" font-size="24" fill="#6e7079" text-anchor="end" font-weight="normal" font-family='"Liberation Sans", sans-serif' >500</text>
<rect x="2487" y="1061.8" width="906" height="2" fill="#e0e6f1"/>
<text x="2470" y="1071.4" font-size="24" fill="#6e7079" text-anchor="end" font-weight="normal" font-family='"Liberation Sans", sans-serif' >1,000</text>
<rect x="2487" y="961.7" width="906" height="2" fill="#e0e6f1"/>
<text x="2470" y="971.3" font-size="24" fill="#6e7079" text-anchor="end" font-weight="normal" font-family='"Liberation Sans", sans-serif' >1,500</text>
<rect x="2487" y="861.6" width="906" height="2" fill="#e0e6f1"/>
<text x="2470" y="871.2" font-size="24" fill="#6e7079" text-anchor="end" font-weight="normal" font-family='"Liberation Sans", sans-serif' >2,000</text>
<rect x="2487" y="761.5" width="906" height="2" fill="#e0e6f1"/>
<text x="2470" y="771.1" font-size="24" fill="#6e7079" text-anchor="end" font-weight="normal" font-family='"Liberation Sans", sans-serif' >2,500</text>
<text x="1273" y="1477" font-size="32" fill="#333333" text-anchor="start" font-weight="bold" font-family='"Liberation Mono", monospace' textLength="229" lengthAdjust="spacingAndGlyphs" >threads.size</text>
<rect x="1326" y="1962.2" width="926" height="2" fill="#e0e6f1"/>
<text x="1309" y="1971.8" font-size="24" fill="#6e7079" text-anchor="end" font-weight="normal" font-family='"Liberation Sans", sans-serif' >50</text>
<rect x="1326" y="1862.1" width="926" height="2" fill="#e0e6f1"/>
<text x="1309" y="1871.7" font-size="24" fill="#6e7079" text-anchor="end" font-weight="normal" font-family='"Liberation Sans", sans-serif' >100</text>
<rect x="1326" y="1762.0" width="926" height="2" fill="#e0e6f1"/>
<text x="1309" y="1771.6" font-size="24" fill="#6e7079" text-anchor="end" font-weight="normal" font-family='"Liberation Sans", sans-serif' >150</text>
<rect x="1326" y="1661.9" width="926" height="2" fill="#e0e6f1"/>
<text x="1309" y="1671.5" font-size="24" fill="#6e7079" text-anchor="end" font-weight="normal" font-family='"Liberation Sans", sans-serif' >200</text>
<rect x="1326" y="1561.8" width="926" height="2" fill="#e0e6f1"/>
<text x="1309" y="1571.4" font-size="24" fill="#6e7079" text-anchor="end" font-weight="normal" font-family='"Liberation Sans", sans-serif' >250</text>
<text x="2413" y="1477" font-size="32" fill="#333333" text-anchor="start" font-weight="bold" font-family='"Liberation Mono", monospace' textLength="382" lengthAdjust="spacingAndGlyphs" >memory_used.mem_used</text>
<text x="2413" y="1526" font-size="24" fill="#6e7079" text-anchor="start" font-weight="normal" font-family='"Liberation Sans", sans-serif' textLength="49" lengthAdjust="spacingAndGlyphs" >Unit</text>
<text x="2474" y="1526" font-size="24" fill="#6e7079" text-anchor="start" font-weight="normal" font-family='"Liberation Sans", sans-serif' >MB</text>
<rect x="2467" y="1962.2" width="925" height="2" fill="#e0e6f1"/>
<text x="2449" y="1971.8" font-size="24" fill="#6e7079" text-anchor="end" font-weight="normal" font-family='"Liberation Sans", sans-serif' >100</text>
<rect x="2467" y="1862.1" width="925" height="2" fill="#e0e6f1"/>
<text x="2449" y="1871.7" font-size="24" fill="#6e7079" text-anchor="end" font-weight="normal" font-family='"Liberation Sans", sans-serif' >200</text>
<rect x="2467" y="1762.0" width="925" height="2" fill="#e0e6f1"/>
<text x="2449" y="1771.6" font-size="24" fill="#6e7079" text-anchor="end" font-weight="normal" font-family='"Liberation Sans", sans-serif' >300</text>
<rect x="2467" y="1661.9" width="925" height="2" fill="#e0e6f1"/>
<text x="2449" y="1671.5" font-size="24" fill="#6e7079" text-anchor="end" font-weight="normal" font-family='"Liberation Sans", sans-serif' >400</text>
<rect x="2467" y="1561.8" width="925" height="2" fill="#e0e6f1"/>
<text x="2449" y="1571.4" font-size="24" fill="#6e7079" text-anchor="end" font-weight="normal" font-family='"Liberation Sans", sans-serif' >500</text>
<rect x="1326" y="1262" width="927" height="2" fill="#6e7079"/>
<rect x="1406.7" y="1263" width="2" height="10" fill="#6e7079"/>
<text x="1407.7" y="1300" font-size="24" fill="#6e7079" text-anchor="middle" font-weight="normal" font-family='"Liberation Sans", sans-serif' textLength="51" lengthAdjust="spacingAndGlyphs" >10:11</text>
<rect x="1572.7" y="1263" width="2" height="10" fill="#6e7079"/>
<text x="1573.7" y="1300" font-size="24" fill="#6e7079" text-anchor="middle" font-weight="normal" font-family='"Liberation Sans", sans-serif' textLength="51" lengthAdjust="spacingAndGlyphs" >10:12</text>
<rect x="1736.9" y="1263" width="2" height="10" fill="#6e7079"/>
<text x="1737.9" y="1300" font-size="24" fill="#6e7079" text-anchor="middle" font-weight="normal" font-family='"Liberation Sans", sans-serif' textLength="51" lengthAdjust="spacingAndGlyphs" >10:13</text>
<rect x="1903.0" y="1263" width="2" height="10" fill="#6e7079"/>
<text x="1904" y="1300" font-size="24" fill="#6e7079" text-anchor="middle" font-weight="normal" font-family='"Liberation Sans", sans-serif' textLength="51" lengthAdjust="spacingAndGlyphs" >10:14</text>
<rect x="2066.8" y="1263" width="2" height="10" fill="#6e7079"/>
<text x="2067.8" y="1300" font-size="24" fill="#6e7079" text-anchor="middle" font-weight="normal" font-family='"Liberation Sans", sans-serif' textLength="51" lengthAdjust="spacingAndGlyphs" >10:15</text>
<rect x="2232.9" y="1263" width="2" height="10" fill="#6e7079"/>
<text x="2233.9" y="1300" font-size="24" fill="#6e7079" text-anchor="middle" font-weight="normal" font-family='"Liberation Sans", sans-serif' textLength="51" lengthAdjust="spacingAndGlyphs" >10:16</text>
<rect x="2487" y="1262" width="906" height="2" fill="#6e7079"/>
<rect x="2567.0" y="1263" width="2" height="10" fill="#6e7079"/>
<text x="2568" y="1300" font-size="24" fill="#6e7079" text-anchor="middle" font-weight="normal" font-family='"Liberation Sans", sans-serif' textLength="51" lengthAdjust="spacingAndGlyphs" >10:11</text>
<rect x="2727.7" y="1263" width="2" height="10" fill="#6e7079"/>
<text x="2728.7" y="1300" font-size="24" fill="#6e7079" text-anchor="middle" font-weight="normal" font-family='"Liberation Sans", sans-serif' textLength="51" lengthAdjust="spacingAndGlyphs" >10:12</text>
<rect x="2888.0" y="1263" width="2" height="10" fill="#6e7079"/>
<text x="2889" y="1300" font-size="24" fill="#6e7079" text-anchor="middle" font-weight="normal" font-family='"Liberation Sans", sans-serif' textLength="51" lengthAdjust="spacingAndGlyphs" >10:13</text>
<rect x="3050.5" y="1263" width="2" height="10" fill="#6e7079"/>
<text x="3051.5" y="1300" font-size="24" fill="#6e7079" text-anchor="middle" font-weight="normal" font-family='"Liberation Sans", sans-serif' textLength="51" lengthAdjust="spacingAndGlyphs" >10:14</text>
<rect x="3210.8" y="1263" width="2" height="10" fill="#6e7079"/>
<text x="3211.8" y="1300" font-size="24" fill="#6e7079" text-anchor="middle" font-weight="normal" font-family='"Liberation Sans", sans-serif' textLength="51" lengthAdjust="spacingAndGlyphs" >10:15</text>
<rect x="3372.6" y="1263" width="2" height="10" fill="#6e7079"/>
<text x="3373.6" y="1300" font-size="24" fill="#6e7079" text-anchor="middle" font-weight="normal" font-family='"Liberation Sans", sans-serif' textLength="51" lengthAdjust="spacingAndGlyphs" >10:16</text>
<path d="M2318,664.0 H2331.5 M2324.5,656.8 V670.4 M2334.4,663.5 H2348.5 V687.3 H2324.3 V673.6" stroke="#5f5f5f" stroke-width="2.5" fill="none"/><path d="M2321,719.65 H2345.6 V744.15 H2320.5 V729.85 M2327.5,712.85 L2320.5,719.65 L2327.5,726.5500000000001" stroke="#5f5f5f" stroke-width="2.5" fill="none"/><path d="M2333,769.7 V793.7 M2320,781.7 L2333,793.7 L2346,781.7 M2319.5,791.7 V800.1 H2346.5 V791.7" stroke="#5f5f5f" stroke-width="2.5" fill="none"/><circle cx="2333" cy="840.55" r="14.2" stroke="#5f5f5f" stroke-width="3.2" fill="none"/><path d="M2333,828.05 V840.55 L2339.8,847.3499999999999 M2319,840.55 H2322.5 M2347,840.55 H2343.5 M2333,854.55 V851.05" stroke="#5f5f5f" stroke-width="3.2" fill="none" stroke-linecap="round"/><circle cx="2333" cy="896.4" r="14.2" stroke="#5f5f5f" stroke-width="3.2" fill="none"/><path d="M2333,883.9 V896.4 L2339.8,903.1999999999999 M2319,896.4 H2322.5 M2347,896.4 H2343.5 M2333,910.4 V906.9" stroke="#5f5f5f" stroke-width="3.2" fill="none" stroke-linecap="round"/><circle cx="2333" cy="952.25" r="14.2" stroke="#5f5f5f" stroke-width="3.2" fill="none"/><path d="M2333,939.75 V952.25 L2339.8,959.05 M2319,952.25 H2322.5 M2347,952.25 H2343.5 M2333,966.25 V962.75" stroke="#5f5f5f" stroke-width="3.2" fill="none" stroke-linecap="round"/><circle cx="2333" cy="1008.1" r="14.2" stroke="#5f5f5f" stroke-width="3.2" fill="none"/><path d="M2333,995.6 V1008.1 L2339.8,1014.9 M2319,1008.1 H2322.5 M2347,1008.1 H2343.5 M2333,1022.1 V1018.6" stroke="#5f5f5f" stroke-width="3.2" fill="none" stroke-linecap="round"/><circle cx="2333" cy="1063.95" r="14.2" stroke="#5f5f5f" stroke-width="3.2" fill="none"/><path d="M2333,1051.45 V1063.95 L2339.8,1070.75 M2319,1063.95 H2322.5 M2347,1063.95 H2343.5 M2333,1077.95 V1074.45" stroke="#5f5f5f" stroke-width="3.2" fill="none" stroke-linecap="round"/><circle cx="2333" cy="1119.8" r="14.2" stroke="#5f5f5f" stroke-width="3.2" fill="none"/><path d="M2333,1107.3 V1119.8 L2339.8,1126.6 M2319,1119.8 H2322.5 M2347,1119.8 H2343.5 M2333,1133.8 V1130.3" stroke="#5f5f5f" stroke-width="3.2" fill="none" stroke-linecap="round"/><path d="M2345,1167.65 A14.3,14.3 0 1 0 2346,1181.15" stroke="#5f5f5f" stroke-width="2.8" fill="none"/><path d="M2347,1159.65 V1170.65 H2337" stroke="#5f5f5f" stroke-width="2.8" fill="none"/>
<path d="M3458,664.0 H3471.5 M3464.5,656.8 V670.4 M3474.4,663.5 H3488.5 V687.3 H3464.3 V673.6" stroke="#5f5f5f" stroke-width="2.5" fill="none"/><path d="M3461,719.65 H3485.6 V744.15 H3460.5 V729.85 M3467.5,712.85 L3460.5,719.65 L3467.5,726.5500000000001" stroke="#5f5f5f" stroke-width="2.5" fill="none"/><path d="M3473,769.7 V793.7 M3460,781.7 L3473,793.7 L3486,781.7 M3459.5,791.7 V800.1 H3486.5 V791.7" stroke="#5f5f5f" stroke-width="2.5" fill="none"/><circle cx="3473" cy="840.55" r="14.2" stroke="#5f5f5f" stroke-width="3.2" fill="none"/><path d="M3473,828.05 V840.55 L3479.8,847.3499999999999 M3459,840.55 H3462.5 M3487,840.55 H3483.5 M3473,854.55 V851.05" stroke="#5f5f5f" stroke-width="3.2" fill="none" stroke-linecap="round"/><circle cx="3473" cy="896.4" r="14.2" stroke="#5f5f5f" stroke-width="3.2" fill="none"/><path d="M3473,883.9 V896.4 L3479.8,903.1999999999999 M3459,896.4 H3462.5 M3487,896.4 H3483.5 M3473,910.4 V906.9" stroke="#5f5f5f" stroke-width="3.2" fill="none" stroke-linecap="round"/><circle cx="3473" cy="952.25" r="14.2" stroke="#5f5f5f" stroke-width="3.2" fill="none"/><path d="M3473,939.75 V952.25 L3479.8,959.05 M3459,952.25 H3462.5 M3487,952.25 H3483.5 M3473,966.25 V962.75" stroke="#5f5f5f" stroke-width="3.2" fill="none" stroke-linecap="round"/><circle cx="3473" cy="1008.1" r="14.2" stroke="#5f5f5f" stroke-width="3.2" fill="none"/><path d="M3473,995.6 V1008.1 L3479.8,1014.9 M3459,1008.1 H3462.5 M3487,1008.1 H3483.5 M3473,1022.1 V1018.6" stroke="#5f5f5f" stroke-width="3.2" fill="none" stroke-linecap="round"/><circle cx="3473" cy="1063.95" r="14.2" stroke="#5f5f5f" stroke-width="3.2" fill="none"/><path d="M3473,1051.45 V1063.95 L3479.8,1070.75 M3459,1063.95 H3462.5 M3487,1063.95 H3483.5 M3473,1077.95 V1074.45" stroke="#5f5f5f" stroke-width="3.2" fill="none" stroke-linecap="round"/><circle cx="3473" cy="1119.8" r="14.2" stroke="#5f5f5f" stroke-width="3.2" fill="none"/><path d="M3473,1107.3 V1119.8 L3479.8,1126.6 M3459,1119.8 H3462.5 M3487,1119.8 H3483.5 M3473,1133.8 V1130.3" stroke="#5f5f5f" stroke-width="3.2" fill="none" stroke-linecap="round"/><path d="M3485,1167.65 A14.3,14.3 0 1 0 3486,1181.15" stroke="#5f5f5f" stroke-width="2.8" fill="none"/><path d="M3487,1159.65 V1170.65 H3477" stroke="#5f5f5f" stroke-width="2.8" fill="none"/>
<path d="M2318,1465.0 H2331.5 M2324.5,1457.8 V1471.4 M2334.4,1464.5 H2348.5 V1488.3 H2324.3 V1474.6" stroke="#5f5f5f" stroke-width="2.5" fill="none"/><path d="M2321,1520.6499999999999 H2345.6 V1545.1499999999999 H2320.5 V1530.85 M2327.5,1513.85 L2320.5,1520.6499999999999 L2327.5,1527.55" stroke="#5f5f5f" stroke-width="2.5" fill="none"/><path d="M2333,1570.7 V1594.7 M2320,1582.7 L2333,1594.7 L2346,1582.7 M2319.5,1592.7 V1601.1000000000001 H2346.5 V1592.7" stroke="#5f5f5f" stroke-width="2.5" fill="none"/><circle cx="2333" cy="1641.55" r="14.2" stroke="#5f5f5f" stroke-width="3.2" fill="none"/><path d="M2333,1629.05 V1641.55 L2339.8,1648.35 M2319,1641.55 H2322.5 M2347,1641.55 H2343.5 M2333,1655.55 V1652.05" stroke="#5f5f5f" stroke-width="3.2" fill="none" stroke-linecap="round"/><circle cx="2333" cy="1697.4" r="14.2" stroke="#5f5f5f" stroke-width="3.2" fill="none"/><path d="M2333,1684.9 V1697.4 L2339.8,1704.2 M2319,1697.4 H2322.5 M2347,1697.4 H2343.5 M2333,1711.4 V1707.9" stroke="#5f5f5f" stroke-width="3.2" fill="none" stroke-linecap="round"/><circle cx="2333" cy="1753.25" r="14.2" stroke="#5f5f5f" stroke-width="3.2" fill="none"/><path d="M2333,1740.75 V1753.25 L2339.8,1760.05 M2319,1753.25 H2322.5 M2347,1753.25 H2343.5 M2333,1767.25 V1763.75" stroke="#5f5f5f" stroke-width="3.2" fill="none" stroke-linecap="round"/><circle cx="2333" cy="1809.1" r="14.2" stroke="#5f5f5f" stroke-width="3.2" fill="none"/><path d="M2333,1796.6 V1809.1 L2339.8,1815.8999999999999 M2319,1809.1 H2322.5 M2347,1809.1 H2343.5 M2333,1823.1 V1819.6" stroke="#5f5f5f" stroke-width="3.2" fill="none" stroke-linecap="round"/><circle cx="2333" cy="1864.95" r="14.2" stroke="#5f5f5f" stroke-width="3.2" fill="none"/><path d="M2333,1852.45 V1864.95 L2339.8,1871.75 M2319,1864.95 H2322.5 M2347,1864.95 H2343.5 M2333,1878.95 V1875.45" stroke="#5f5f5f" stroke-width="3.2" fill="none" stroke-linecap="round"/><circle cx="2333" cy="1920.8" r="14.2" stroke="#5f5f5f" stroke-width="3.2" fill="none"/><path d="M2333,1908.3 V1920.8 L2339.8,1927.6 M2319,1920.8 H2322.5 M2347,1920.8 H2343.5 M2333,1934.8 V1931.3" stroke="#5f5f5f" stroke-width="3.2" fill="none" stroke-linecap="round"/><path d="M2345,1968.65 A14.3,14.3 0 1 0 2346,1982.15" stroke="#5f5f5f" stroke-width="2.8" fill="none"/><path d="M2347,1960.65 V1971.65 H2337" stroke="#5f5f5f" stroke-width="2.8" fill="none"/>
<path d="M3458,1465.0 H3471.5 M3464.5,1457.8 V1471.4 M3474.4,1464.5 H3488.5 V1488.3 H3464.3 V1474.6" stroke="#5f5f5f" stroke-width="2.5" fill="none"/><path d="M3461,1520.6499999999999 H3485.6 V1545.1499999999999 H3460.5 V1530.85 M3467.5,1513.85 L3460.5,1520.6499999999999 L3467.5,1527.55" stroke="#5f5f5f" stroke-width="2.5" fill="none"/><path d="M3473,1570.7 V1594.7 M3460,1582.7 L3473,1594.7 L3486,1582.7 M3459.5,1592.7 V1601.1000000000001 H3486.5 V1592.7" stroke="#5f5f5f" stroke-width="2.5" fill="none"/><circle cx="3473" cy="1641.55" r="14.2" stroke="#5f5f5f" stroke-width="3.2" fill="none"/><path d="M3473,1629.05 V1641.55 L3479.8,1648.35 M3459,1641.55 H3462.5 M3487,1641.55 H3483.5 M3473,1655.55 V1652.05" stroke="#5f5f5f" stroke-width="3.2" fill="none" stroke-linecap="round"/><circle cx="3473" cy="1697.4" r="14.2" stroke="#5f5f5f" stroke-width="3.2" fill="none"/><path d="M3473,1684.9 V1697.4 L3479.8,1704.2 M3459,1697.4 H3462.5 M3487,1697.4 H3483.5 M3473,1711.4 V1707.9" stroke="#5f5f5f" stroke-width="3.2" fill="none" stroke-linecap="round"/><circle cx="3473" cy="1753.25" r="14.2" stroke="#5f5f5f" stroke-width="3.2" fill="none"/><path d="M3473,1740.75 V1753.25 L3479.8,1760.05 M3459,1753.25 H3462.5 M3487,1753.25 H3483.5 M3473,1767.25 V1763.75" stroke="#5f5f5f" stroke-width="3.2" fill="none" stroke-linecap="round"/><circle cx="3473" cy="1809.1" r="14.2" stroke="#5f5f5f" stroke-width="3.2" fill="none"/><path d="M3473,1796.6 V1809.1 L3479.8,1815.8999999999999 M3459,1809.1 H3462.5 M3487,1809.1 H3483.5 M3473,1823.1 V1819.6" stroke="#5f5f5f" stroke-width="3.2" fill="none" stroke-linecap="round"/><circle cx="3473" cy="1864.95" r="14.2" stroke="#5f5f5f" stroke-width="3.2" fill="none"/><path d="M3473,1852.45 V1864.95 L3479.8,1871.75 M3459,1864.95 H3462.5 M3487,1864.95 H3483.5 M3473,1878.95 V1875.45" stroke="#5f5f5f" stroke-width="3.2" fill="none" stroke-linecap="round"/><circle cx="3473" cy="1920.8" r="14.2" stroke="#5f5f5f" stroke-width="3.2" fill="none"/><path d="M3473,1908.3 V1920.8 L3479.8,1927.6 M3459,1920.8 H3462.5 M3487,1920.8 H3483.5 M3473,1934.8 V1931.3" stroke="#5f5f5f" stroke-width="3.2" fill="none" stroke-linecap="round"/><path d="M3485,1968.65 A14.3,14.3 0 1 0 3486,1982.15" stroke="#5f5f5f" stroke-width="2.8" fill="none"/><path d="M3487,1960.65 V1971.65 H3477" stroke="#5f5f5f" stroke-width="2.8" fill="none"/>
<path d="M1326.1,1250.6 C1328.2,1244.7 1333.6,1229.5 1338.9,1215.0 C1344.2,1200.5 1352.2,1176.8 1357.9,1163.9 C1363.6,1151.0 1368.8,1143.2 1373.0,1137.4 C1377.2,1131.7 1380.2,1129.7 1383.4,1129.4 C1386.6,1129.1 1390.0,1130.1 1392.0,1135.5 C1394.0,1140.9 1394.5,1148.1 1395.7,1162.0 C1397.0,1175.9 1397.6,1204.1 1399.5,1218.8 C1401.4,1233.5 1404.6,1244.0 1407.1,1250.0 C1409.6,1256.0 1408.7,1253.8 1414.7,1254.8 C1420.7,1255.8 1433.0,1256.1 1443.1,1256.1 C1453.2,1256.1 1464.7,1255.0 1475.3,1254.8 C1485.9,1254.6 1499.6,1255.8 1506.5,1254.8 C1513.4,1253.8 1513.3,1253.5 1516.9,1249.1 C1520.5,1244.7 1524.5,1239.6 1528.3,1228.3 C1532.1,1217.0 1536.2,1194.9 1539.7,1181.0 C1543.2,1167.1 1545.3,1153.2 1549.1,1145.0 C1552.9,1136.8 1558.6,1132.3 1562.4,1131.7 C1566.2,1131.1 1569.6,1134.6 1571.8,1141.2 C1574.0,1147.8 1574.2,1158.6 1575.6,1171.5 C1577.0,1184.4 1578.2,1205.2 1580.4,1218.8 C1582.6,1232.4 1585.0,1246.2 1588.9,1252.9 C1592.8,1259.6 1597.4,1257.9 1604.0,1259.0 C1610.6,1260.1 1621.1,1260.7 1628.7,1259.5 C1636.3,1258.3 1642.6,1253.6 1649.5,1252.0 C1656.4,1250.4 1663.7,1250.3 1670.3,1250.0 C1676.9,1249.7 1683.0,1248.2 1689.3,1250.0 C1695.6,1251.8 1700.3,1258.8 1708.2,1260.5 C1716.1,1262.2 1729.7,1261.4 1736.6,1260.1 C1743.5,1258.8 1745.1,1259.8 1749.8,1252.9 C1754.5,1246.0 1760.3,1237.1 1765.0,1218.8 C1769.7,1200.5 1774.4,1165.1 1778.2,1143.0 C1782.0,1120.9 1785.1,1101.1 1787.6,1086.3 C1790.1,1071.5 1791.2,1061.3 1793.3,1054.1 C1795.3,1046.9 1797.5,1043.1 1799.9,1043.1 C1802.3,1043.1 1805.6,1045.3 1807.5,1054.1 C1809.4,1062.9 1810.1,1076.1 1811.2,1095.7 C1812.3,1115.3 1812.7,1149.4 1814.1,1171.5 C1815.5,1193.6 1817.3,1214.5 1819.8,1228.3 C1822.3,1242.1 1822.6,1250.2 1829.2,1254.2 C1835.8,1258.2 1848.8,1252.4 1859.5,1252.5 C1870.2,1252.6 1883.2,1254.1 1893.6,1254.8 C1904.0,1255.5 1912.5,1256.4 1922.0,1256.7 C1931.5,1257.0 1940.9,1258.0 1950.4,1256.7 C1959.9,1255.4 1968.7,1250.5 1978.8,1249.1 C1988.9,1247.7 2000.6,1249.0 2011.0,1248.2 C2021.4,1247.4 2032.1,1244.2 2041.3,1244.4 C2050.4,1244.7 2055.8,1249.0 2065.9,1249.7 C2076.0,1250.4 2091.2,1248.1 2101.9,1248.6 C2112.6,1249.1 2120.8,1252.0 2130.3,1252.5 C2139.8,1253.0 2148.6,1252.0 2158.7,1251.4 C2168.8,1250.8 2179.8,1249.0 2190.9,1248.7 C2202.0,1248.4 2214.6,1249.5 2225.0,1249.5 C2235.4,1249.5 2248.7,1248.8 2253.4,1248.7" stroke="#4b65c4" stroke-width="4" fill="none" stroke-linejoin="round" stroke-linecap="round"/>
<rect x="2487" y="1028" width="906" height="4" fill="#4b65c4"/>
<path d="M1326.0,1955.2 C1326.9,1947.7 1329.1,1923.1 1331.2,1910.4 C1333.3,1897.7 1334.6,1887.5 1338.6,1878.8 C1342.6,1870.0 1346.7,1861.4 1355.4,1857.9 C1364.1,1854.4 1383.0,1858.2 1390.8,1857.9 C1398.6,1857.7 1397.7,1857.3 1402.0,1856.4 C1406.3,1855.5 1408.2,1853.7 1416.9,1852.3 C1425.6,1850.9 1445.5,1847.6 1454.2,1848.0 C1462.9,1848.4 1464.1,1848.5 1469.1,1854.5 C1474.1,1860.5 1479.3,1871.9 1484.0,1884.3 C1488.7,1896.7 1493.0,1915.7 1497.0,1929.1 C1501.0,1942.5 1504.9,1957.4 1508.2,1964.5 C1511.5,1971.6 1513.5,1973.2 1516.6,1971.9 C1519.7,1970.7 1524.2,1967.2 1526.8,1957.0 C1529.4,1946.8 1530.7,1928.1 1532.4,1910.4 C1534.1,1892.7 1534.3,1864.8 1537.1,1850.8 C1539.9,1836.8 1541.3,1830.0 1549.2,1826.2 C1557.1,1822.4 1574.7,1829.0 1584.6,1828.1 C1594.5,1827.2 1599.5,1822.6 1608.8,1820.6 C1618.1,1818.6 1629.6,1816.7 1640.5,1816.3 C1651.4,1815.9 1662.2,1818.2 1674.0,1818.2 C1685.8,1818.2 1702.6,1814.9 1711.3,1816.0 C1720.0,1817.1 1721.5,1818.3 1726.2,1824.7 C1730.9,1831.1 1735.6,1842.7 1739.3,1854.5 C1743.0,1866.3 1745.5,1882.5 1748.6,1895.5 C1751.7,1908.5 1754.5,1924.7 1757.9,1932.8 C1761.3,1940.9 1765.7,1944.6 1769.1,1944.0 C1772.5,1943.4 1775.6,1939.0 1778.4,1929.1 C1781.2,1919.1 1783.7,1893.6 1785.8,1884.3 C1787.9,1875.0 1788.8,1876.3 1791.2,1873.2 C1793.7,1870.1 1793.0,1867.0 1800.5,1865.7 C1808.0,1864.5 1828.5,1866.0 1835.9,1865.7 C1843.4,1865.4 1840.5,1865.5 1845.2,1863.9 C1849.9,1862.4 1855.5,1858.7 1863.9,1856.4 C1872.3,1854.1 1884.6,1850.4 1895.5,1849.9 C1906.4,1849.4 1917.3,1853.0 1929.1,1853.6 C1940.9,1854.2 1955.4,1854.2 1966.3,1853.6 C1977.2,1853.0 1984.3,1849.6 1994.3,1849.9 C2004.2,1850.2 2015.1,1855.2 2026.0,1855.5 C2036.9,1855.8 2052.7,1852.0 2059.5,1851.7 C2066.3,1851.4 2063.3,1851.6 2067.0,1853.6 C2070.7,1855.6 2077.6,1861.8 2081.9,1863.9 C2086.2,1866.0 2089.6,1866.1 2093.0,1866.1 C2096.4,1866.1 2097.7,1865.8 2102.4,1863.9 C2107.1,1862.0 2112.6,1856.5 2121.0,1854.5 C2129.4,1852.5 2141.8,1852.8 2152.7,1851.7 C2163.6,1850.6 2178.8,1848.3 2186.2,1848.0 C2193.6,1847.7 2192.4,1848.7 2197.4,1849.9 C2202.4,1851.2 2209.8,1854.9 2216.0,1855.5 C2222.2,1856.1 2228.5,1854.4 2234.7,1853.6 C2240.9,1852.8 2250.2,1850.9 2253.3,1850.4" stroke="#91cc75" stroke-width="4" fill="none" stroke-linejoin="round" stroke-linecap="round"/>
<path d="M1326.0,2003.6 C1328.7,2003.3 1336.0,2003.6 1342.4,2001.7 C1348.9,1999.8 1358.5,1997.4 1364.7,1992.4 C1370.9,1987.4 1375.6,1975.6 1379.6,1971.9 C1383.6,1968.2 1382.7,1969.7 1388.9,1970.0 C1395.1,1970.3 1405.4,1973.2 1416.9,1973.8 C1428.4,1974.4 1448.3,1972.2 1457.9,1973.8 C1467.5,1975.3 1468.2,1977.8 1474.7,1983.1 C1481.2,1988.4 1489.9,2000.7 1497.0,2005.5 C1504.1,2010.3 1511.9,2011.4 1517.5,2012.0 C1523.1,2012.6 1524.7,2012.2 1530.6,2009.2 C1536.5,2006.2 1546.4,2000.2 1552.9,1994.3 C1559.4,1988.4 1564.7,1977.8 1569.7,1973.8 C1574.7,1969.8 1569.0,1970.6 1582.7,1970.0 C1596.4,1969.4 1635.9,1970.4 1651.7,1970.0 C1667.5,1969.6 1670.3,1968.0 1677.8,1967.8 C1685.2,1967.6 1688.3,1966.9 1696.4,1969.1 C1704.5,1971.3 1717.5,1976.4 1726.2,1981.2 C1734.9,1986.0 1741.4,1994.6 1748.6,1998.0 C1755.8,2001.4 1763.5,2001.7 1769.1,2001.7 C1774.7,2001.7 1777.8,2000.2 1782.1,1998.0 C1786.4,1995.8 1790.6,1992.1 1794.9,1988.7 C1799.2,1985.3 1803.3,1982.0 1808.0,1977.5 C1812.7,1973.0 1817.3,1965.1 1822.9,1961.7 C1828.5,1958.3 1833.8,1957.9 1841.5,1957.0 C1849.2,1956.1 1860.4,1955.9 1869.4,1956.1 C1878.4,1956.3 1885.5,1958.0 1895.5,1958.0 C1905.5,1958.0 1917.3,1955.9 1929.1,1956.1 C1940.9,1956.2 1955.4,1957.4 1966.3,1958.9 C1977.2,1960.5 1985.0,1963.9 1994.3,1965.4 C2003.6,1966.9 2011.3,1967.0 2022.2,1967.8 C2033.1,1968.6 2051.4,1970.2 2059.5,1970.0 C2067.6,1969.8 2065.4,1968.9 2070.7,1966.3 C2076.0,1963.7 2085.9,1955.8 2091.2,1954.2 C2096.5,1952.7 2098.1,1954.5 2102.4,1957.0 C2106.8,1959.5 2108.9,1966.9 2117.3,1969.1 C2125.7,1971.3 2140.6,1969.5 2152.7,1970.0 C2164.8,1970.5 2178.1,1971.3 2189.9,1971.9 C2201.7,1972.5 2212.9,1974.1 2223.5,1973.8 C2234.1,1973.5 2248.3,1970.6 2253.3,1970.0" stroke="#fac858" stroke-width="4" fill="none" stroke-linejoin="round" stroke-linecap="round"/>
<path d="M2466.0,1984.0 C2474.3,1987.0 2498.3,1997.0 2515.9,2001.7 C2533.5,2006.4 2554.7,2009.0 2571.8,2011.9 C2588.9,2014.9 2603.7,2017.2 2618.4,2019.4 C2633.1,2021.6 2646.4,2024.6 2660.0,2025.0 C2673.6,2025.4 2689.2,2023.2 2700.0,2022.0 C2710.8,2020.8 2716.5,2019.0 2724.6,2017.5 C2732.7,2016.0 2734.8,2013.9 2748.8,2012.9 C2762.8,2011.9 2791.3,2012.7 2808.4,2011.6 C2825.5,2010.5 2839.5,2007.5 2851.3,2006.3 C2863.1,2005.1 2870.6,2004.3 2879.3,2004.5 C2888.0,2004.7 2896.4,2005.4 2903.5,2007.3 C2910.6,2009.2 2916.2,2014.0 2922.1,2015.7 C2927.9,2017.4 2929.6,2017.4 2938.6,2017.6 C2947.6,2017.8 2963.5,2017.4 2975.9,2016.6 C2988.3,2015.8 3000.8,2014.0 3013.2,2012.9 C3025.6,2011.8 3038.0,2011.2 3050.4,2010.1 C3062.8,2008.9 3075.3,2007.0 3087.7,2006.0 C3100.1,2005.0 3111.0,2005.5 3125.0,2004.2 C3139.0,2002.9 3156.6,1999.1 3171.5,1998.0 C3186.4,1996.9 3205.1,1999.8 3214.4,1997.6 C3223.7,1995.4 3223.2,1988.4 3227.5,1985.0 C3231.8,1981.6 3233.7,1977.4 3240.5,1977.1 C3247.3,1976.8 3258.2,1982.5 3268.4,1983.1 C3278.7,1983.7 3291.8,1980.9 3302.0,1980.9 C3312.2,1980.9 3321.5,1983.0 3329.9,1983.1 C3338.3,1983.2 3341.7,1982.6 3352.3,1981.6 C3362.9,1980.6 3386.5,1977.8 3393.3,1977.1" stroke="#4b65c4" stroke-width="4" fill="none" stroke-linejoin="round" stroke-linecap="round"/>
<path d="M2466.0,2017.5 C2472.8,2013.8 2492.1,2003.6 2506.6,1995.2 C2521.1,1986.8 2536.1,1976.5 2553.2,1967.2 C2570.3,1957.9 2592.0,1946.3 2609.1,1939.3 C2626.2,1932.3 2640.2,1928.9 2655.7,1925.3 C2671.2,1921.7 2692.9,1918.4 2702.2,1917.8 C2711.5,1917.2 2708.5,1918.3 2711.6,1921.6 C2714.7,1924.9 2718.6,1929.5 2720.9,1937.4 C2723.2,1945.3 2723.9,1958.8 2725.5,1969.1 C2727.1,1979.3 2728.5,1992.7 2730.2,1998.9 C2731.9,2005.1 2733.6,2006.6 2735.8,2006.3 C2738.0,2006.0 2740.7,2006.3 2743.2,1997.0 C2745.7,1987.7 2748.2,1965.9 2750.7,1950.4 C2753.2,1934.9 2755.8,1914.3 2758.1,1903.9 C2760.4,1893.5 2762.2,1888.6 2764.7,1888.0 C2767.2,1887.4 2770.7,1889.7 2773.0,1900.1 C2775.3,1910.5 2776.7,1930.8 2778.6,1950.4 C2780.5,1970.0 2782.3,2001.7 2784.2,2017.5 C2786.1,2033.3 2787.4,2039.6 2790.0,2045.0 C2792.6,2050.4 2796.3,2054.6 2800.0,2050.0 C2803.7,2045.4 2807.1,2034.1 2812.2,2017.5 C2817.3,2000.9 2825.8,1974.0 2830.8,1950.4 C2835.8,1926.8 2838.9,1895.2 2842.0,1875.9 C2845.1,1856.7 2847.2,1842.8 2849.4,1834.9 C2851.6,1827.0 2852.8,1827.8 2855.0,1828.4 C2857.2,1829.0 2860.3,1827.6 2862.5,1838.6 C2864.7,1849.6 2866.2,1871.2 2868.1,1894.5 C2870.0,1917.8 2870.8,1959.0 2873.7,1978.4 C2876.6,1997.8 2882.4,2007.0 2885.8,2011.0 C2889.2,2015.0 2890.0,2012.7 2894.2,2002.6 C2898.4,1992.5 2905.6,1967.8 2910.9,1950.4 C2916.2,1933.0 2920.9,1910.1 2925.8,1898.3 C2930.7,1886.5 2936.5,1880.8 2940.5,1879.7 C2944.5,1878.6 2947.0,1882.0 2949.8,1891.8 C2952.6,1901.6 2955.1,1917.4 2957.3,1938.4 C2959.5,1959.4 2960.8,1999.8 2962.9,2017.6 C2965.0,2035.4 2967.4,2045.0 2970.0,2045.0 C2972.6,2045.0 2975.5,2036.9 2978.7,2017.6 C2981.8,1998.3 2985.3,1950.7 2988.9,1929.1 C2992.5,1907.5 2996.7,1891.2 3000.1,1888.1 C3003.5,1885.0 3006.3,1888.8 3009.4,1910.4 C3012.5,1932.0 3015.0,1994.3 3018.8,2017.6 C3022.6,2040.9 3027.3,2050.0 3032.0,2050.0 C3036.7,2050.0 3041.1,2033.1 3046.7,2017.6 C3052.2,2002.1 3060.0,1982.6 3065.3,1957.0 C3070.6,1931.4 3074.2,1886.0 3078.4,1863.9 C3082.6,1841.9 3086.8,1826.9 3090.5,1824.7 C3094.2,1822.5 3098.1,1831.8 3100.7,1850.8 C3103.3,1869.8 3102.9,1912.5 3106.3,1938.4 C3109.7,1964.3 3116.5,1998.0 3121.2,2006.4 C3125.9,2014.8 3129.0,2002.2 3134.3,1988.7 C3139.6,1975.2 3145.1,1947.8 3152.9,1925.3 C3160.7,1902.8 3174.4,1862.3 3180.9,1853.6 C3187.4,1844.9 3188.9,1857.5 3192.0,1873.2 C3195.1,1888.9 3196.4,1924.0 3199.5,1947.7 C3202.6,1971.5 3207.3,2009.5 3210.7,2015.7 C3214.1,2021.9 3217.2,2002.5 3220.0,1985.0 C3222.8,1967.5 3223.9,1926.2 3227.5,1910.4 C3231.1,1894.6 3234.0,1888.5 3241.4,1889.9 C3248.8,1891.3 3264.9,1916.9 3272.2,1918.8 C3279.5,1920.7 3280.2,1910.9 3285.2,1901.1 C3290.2,1891.3 3297.3,1863.2 3302.0,1860.1 C3306.7,1857.0 3310.1,1856.2 3313.2,1882.5 C3316.3,1908.8 3317.8,1990.5 3320.6,2017.6 C3323.4,2044.7 3326.6,2045.0 3330.0,2045.0 C3333.4,2045.0 3334.9,2034.4 3341.1,2017.6 C3347.3,2000.8 3358.5,1966.8 3367.2,1944.0 C3375.9,1921.2 3389.0,1891.2 3393.3,1880.6" stroke="#fac858" stroke-width="4" fill="none" stroke-linejoin="round" stroke-linecap="round"/>
<path d="M2466.0,1943.9 C2474.3,1944.8 2495.2,1947.8 2515.9,1949.5 C2536.6,1951.2 2568.7,1953.0 2590.4,1954.2 C2612.1,1955.5 2626.7,1956.5 2646.3,1957.0 C2665.9,1957.5 2695.4,1957.8 2707.8,1957.5 C2720.2,1957.2 2712.5,1956.8 2720.9,1955.1 C2729.3,1953.4 2742.6,1948.6 2758.1,1947.1 C2773.6,1945.5 2793.2,1946.2 2814.0,1945.8 C2834.8,1945.4 2867.5,1944.3 2883.0,1944.8 C2898.5,1945.3 2900.1,1946.9 2907.2,1948.6 C2914.3,1950.3 2920.2,1953.9 2925.8,1955.1 C2931.4,1956.2 2933.4,1955.8 2940.5,1955.5 C2947.6,1955.2 2958.8,1954.9 2968.4,1953.3 C2978.0,1951.7 2981.5,1947.2 2998.3,1945.8 C3015.1,1944.4 3032.5,1945.3 3069.1,1944.9 C3105.7,1944.5 3164.1,1943.9 3218.1,1943.6 C3272.1,1943.3 3364.1,1943.1 3393.3,1943.0" stroke="#73c0de" stroke-width="4" fill="none" stroke-linejoin="round" stroke-linecap="round"/>
<rect x="2010" y="1543.2" width="50" height="4" fill="#4b65c4"/>
<circle cx="2035" cy="1545.2" r="11" fill="#ffffff" stroke="#4b65c4" stroke-width="4"/>
<text x="2071" y="1553.7" font-size="24" fill="#333333" text-anchor="start" font-weight="normal" font-family='"Liberation Sans", sans-serif' textLength="103" lengthAdjust="spacingAndGlyphs" >`blocked`</text>
<rect x="2010" y="1589.6" width="50" height="4" fill="#91cc75"/>
<circle cx="2035" cy="1591.6" r="11" fill="#ffffff" stroke="#91cc75" stroke-width="4"/>
<text x="2071" y="1600.1" font-size="24" fill="#333333" text-anchor="start" font-weight="normal" font-family='"Liberation Sans", sans-serif' textLength="94" lengthAdjust="spacingAndGlyphs" >`waiting`</text>
<rect x="2010" y="1636.4" width="50" height="4" fill="#fac858"/>
<circle cx="2035" cy="1638.4" r="11" fill="#ffffff" stroke="#fac858" stroke-width="4"/>
<text x="2071" y="1646.9" font-size="24" fill="#333333" text-anchor="start" font-weight="normal" font-family='"Liberation Sans", sans-serif' textLength="173" lengthAdjust="spacingAndGlyphs" >`timed-waiting`</text>
<rect x="2010" y="1682.8" width="50" height="4" fill="#ee6666"/>
<circle cx="2035" cy="1684.8" r="11" fill="#ffffff" stroke="#ee6666" stroke-width="4"/>
<text x="2071" y="1693.3" font-size="24" fill="#333333" text-anchor="start" font-weight="normal" font-family='"Liberation Sans", sans-serif' textLength="59" lengthAdjust="spacingAndGlyphs" >`new`</text>
<rect x="2010" y="1728.7" width="50" height="4" fill="#73c0de"/>
<circle cx="2035" cy="1730.7" r="11" fill="#ffffff" stroke="#73c0de" stroke-width="4"/>
<text x="2071" y="1739.2" font-size="24" fill="#333333" text-anchor="start" font-weight="normal" font-family='"Liberation Sans", sans-serif' textLength="133" lengthAdjust="spacingAndGlyphs" >`terminated`</text>
<rect x="2981" y="1543.2" width="50" height="4" fill="#4b65c4"/>
<circle cx="3006" cy="1545.2" r="11" fill="#ffffff" stroke="#4b65c4" stroke-width="4"/>
<text x="3042" y="1553.7" font-size="24" fill="#333333" text-anchor="start" font-weight="normal" font-family='"Liberation Sans", sans-serif' textLength="140" lengthAdjust="spacingAndGlyphs" >`G1 Old Gen`</text>
<rect x="2981" y="1589.6" width="50" height="4" fill="#91cc75"/>
<circle cx="3006" cy="1591.6" r="11" fill="#ffffff" stroke="#91cc75" stroke-width="4"/>
<text x="3042" y="1600.1" font-size="24" fill="#333333" text-anchor="start" font-weight="normal" font-family='"Liberation Sans", sans-serif' textLength="339" lengthAdjust="spacingAndGlyphs" >`CodeHeap \'non-nmethods\'`</text>
<rect x="2981" y="1636.4" width="50" height="4" fill="#fac858"/>
<circle cx="3006" cy="1638.4" r="11" fill="#ffffff" stroke="#fac858" stroke-width="4"/>
<text x="3042" y="1646.9" font-size="24" fill="#333333" text-anchor="start" font-weight="normal" font-family='"Liberation Sans", sans-serif' textLength="182" lengthAdjust="spacingAndGlyphs" >`G1 Eden Space`</text>
<rect x="2981" y="1682.8" width="50" height="4" fill="#ee6666"/>
<circle cx="3006" cy="1684.8" r="11" fill="#ffffff" stroke="#ee6666" stroke-width="4"/>
<text x="3042" y="1693.3" font-size="24" fill="#333333" text-anchor="start" font-weight="normal" font-family='"Liberation Sans", sans-serif' textLength="299" lengthAdjust="spacingAndGlyphs" >`Compressed Class Space`</text>
<rect x="2981" y="1728.7" width="50" height="4" fill="#73c0de"/>
<circle cx="3006" cy="1730.7" r="11" fill="#ffffff" stroke="#73c0de" stroke-width="4"/>
<text x="3042" y="1739.2" font-size="24" fill="#333333" text-anchor="start" font-weight="normal" font-family='"Liberation Sans", sans-serif' textLength="136" lengthAdjust="spacingAndGlyphs" >`Metaspace`</text>
</svg>
<div style="position:absolute;left:3844px;top:714px;width:94px;height:96px;background:#3949ab;border-radius:8px 0 0 8px;z-index:6;"></div>
<div style="position:absolute;left:3812px;top:1750px;width:64px;height:64px;background:#fff;border-radius:50%;z-index:6;box-shadow:0 6px 16px rgba(0,0,0,0.10), 0 3px 6px -4px rgba(0,0,0,0.12), 0 9px 28px 8px rgba(0,0,0,0.05);"></div>
<svg style="position:absolute;left:0;top:0;z-index:7;" width="4064" height="2166" viewBox="0 0 4064 2166"><polygon points="3887.4,744.6 3896.6,744.6 3896.1,748.6 3901.5,751.7 3904.8,749.3 3909.4,757.3 3905.7,758.9 3905.7,765.1 3909.4,766.7 3904.8,774.7 3901.5,772.3 3896.1,775.4 3896.6,779.4 3887.4,779.4 3887.9,775.4 3882.5,772.3 3879.2,774.7 3874.6,766.7 3878.3,765.1 3878.3,758.9 3874.6,757.3 3879.2,749.3 3882.5,751.7 3887.9,748.6" stroke="#fff" stroke-width="3" fill="none" stroke-linejoin="round"/><circle cx="3892" cy="762" r="6.2" stroke="#fff" stroke-width="3" fill="none"/><g transform="translate(3845,1781) rotate(-45)"><rect x="-4.8" y="-23.5" width="9.6" height="47" rx="4.8" fill="none" stroke="#000" stroke-width="2.8"/><path d="M-4.8,-13.5 H4.8" stroke="#000" stroke-width="2.8"/></g><g stroke="#000" stroke-width="3.2" stroke-linecap="round"><path d="M3852.5,1759.5 V1769.5 M3847.5,1764.5 H3857.5" transform="rotate(12 3852.5 1764.5)"/><path d="M3830,1783.5 V1793.5 M3825,1788.5 H3835" transform="rotate(12 3830 1788.5)"/></g><circle cx="3861" cy="1778" r="2.8" fill="#000"/><circle cx="3841.2" cy="1796" r="2" fill="#000"/></svg>
</div></body></html>
